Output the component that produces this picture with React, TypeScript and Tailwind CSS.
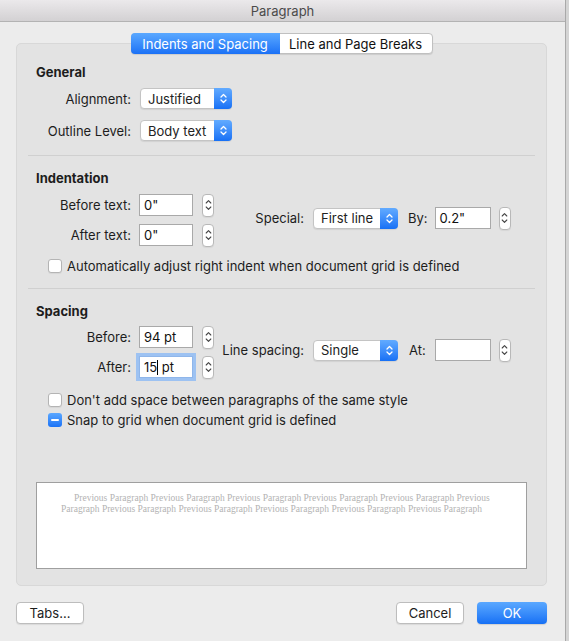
import React from "react";

function PopupArrows() {
    return (
        <svg width="7" height="11" viewBox="0 0 7 11" fill="none" stroke="white" strokeWidth="1.3" strokeLinecap="round" strokeLinejoin="round">
            <path d="M1 4 L3.5 1.5 L6 4" />
            <path d="M1 7 L3.5 9.5 L6 7" />
        </svg>
    );
}

function Popup({ value, className }: { value: string; className: string }) {
    return (
        <div className={"flex h-[21px] items-stretch rounded-[4px] border border-[#c4c4c4] bg-white shadow-[0_1px_1px_rgba(0,0,0,0.08)] " + className}>
            <span className="flex flex-1 items-center pl-[7px] text-[13px] text-[#222]">{value}</span>
            <span className="-my-px -mr-px flex w-[18px] items-center justify-center rounded-r-[4px] bg-gradient-to-b from-[#62abff] to-[#1670f5]">
                <PopupArrows />
            </span>
        </div>
    );
}

function Stepper({ className = "" }: { className?: string }) {
    return (
        <div className={"flex h-[23px] w-[12px] shrink-0 items-center justify-center rounded-[4px] border border-[#b8b8b8] bg-white shadow-[0_1px_1px_rgba(0,0,0,0.06)] " + className}>
            <svg width="7" height="14" viewBox="0 0 7 14" fill="none" stroke="#444" strokeWidth="1.1" strokeLinecap="round" strokeLinejoin="round">
                <path d="M1.2 5 L3.5 2.7 L5.8 5" />
                <path d="M1.2 9 L3.5 11.3 L5.8 9" />
            </svg>
        </div>
    );
}

function Field({ value, className = "" }: { value: string; className?: string }) {
    return (
        <div className={"flex h-[22px] items-center border border-[#a9a9a9] bg-white pl-[4px] text-[13px] text-[#111] " + className}>
            {value}
        </div>
    );
}

function FieldRow({ label, value }: { label: string; value: string }) {
    return (
        <div className="flex h-[22px] items-center">
            <span className="w-[114px] text-right">{label}</span>
            <Field value={value} className="ml-[8px] w-[54px]" />
            <Stepper className="ml-[9px]" />
        </div>
    );
}

function Check({ label, mixed = false }: { label: string; mixed?: boolean }) {
    return (
        <div className="flex h-[16px] items-center pl-[31px]">
            {mixed ? (
                <span className="flex h-[14px] w-[14px] items-center justify-center rounded-[3px] bg-gradient-to-b from-[#5aa7ff] to-[#1a72f6]">
                    <span className="h-[2px] w-[8px] rounded-full bg-white" />
                </span>
            ) : (
                <span className="h-[14px] w-[14px] rounded-[3px] border border-[#b4b4b4] bg-white shadow-[0_1px_1px_rgba(0,0,0,0.06)]" />
            )}
            <span className="ml-[5px]">{label}</span>
        </div>
    );
}

function Heading({ children, className = "" }: { children: React.ReactNode; className?: string }) {
    return <div className={"h-[16px] pl-[19px] text-[13px] font-bold leading-[16px] " + className}>{children}</div>;
}

function Separator() {
    return <div className="mx-[11px] mt-[14px] h-px bg-[#d0d0d0]" />;
}

export default function App() {
    return (
        <div className="flex h-[641px] w-[569px] bg-[#d4d4d4] font-['Inter',sans-serif] text-[13px] leading-[16px] text-[#1d1d1d]">
            <div className="flex h-full w-[566px] flex-col border-r border-[#a9a9a9] bg-[#ececec]">
                {/* title bar */}
                <div className="flex h-[22px] shrink-0 items-center justify-center rounded-tr-[5px] border-b border-[#b3b3b3] bg-gradient-to-b from-[#ebe9eb] to-[#d3d1d3] text-[13px] text-[#4b4b4b]">
                    Paragraph
                </div>

                <div className="flex flex-col pl-[16px] pt-[11px]">
                    {/* tabs */}
                    <div className="relative z-10 -mb-[11px] flex w-[531px] justify-center">
                        <div className="flex h-[21px] rounded-[4px] border border-[#c0c0c0] bg-white text-[13px] shadow-[0_1px_1px_rgba(0,0,0,0.1)]">
                            <span className="-my-px -ml-px flex w-[149px] items-center justify-center rounded-l-[4px] bg-gradient-to-b from-[#5aa8ff] to-[#1b71f6] text-white">
                                Indents and Spacing
                            </span>
                            <span className="flex w-[152px] items-center justify-center text-[#111]">Line and Page Breaks</span>
                        </div>
                    </div>

                    {/* panel */}
                    <div className="flex h-[543px] w-[531px] flex-col rounded-[5px] border border-[#d8d8d8] bg-[#e3e3e3] pt-[20px]">
                        <Heading>General</Heading>
                        <div className="mt-[8px] flex h-[21px] items-center">
                            <span className="w-[114px] text-right">Alignment:</span>
                            <Popup value="Justified" className="ml-[9px] w-[92px]" />
                        </div>
                        <div className="mt-[11px] flex h-[21px] items-center">
                            <span className="w-[114px] text-right">Outline Level:</span>
                            <Popup value="Body text" className="ml-[9px] w-[92px]" />
                        </div>

                        <Separator />

                        <Heading className="mt-[14px]">Indentation</Heading>
                        <div className="mt-[8px] flex items-center">
                            <div className="flex flex-col gap-[8px]">
                                <FieldRow label="Before text:" value={'0"'} />
                                <FieldRow label="After text:" value={'0"'} />
                            </div>
                            <div className="mb-[4px] flex h-[22px] items-center">
                                <span className="w-[90px] text-right">Special:</span>
                                <Popup value="First line" className="ml-[9px] w-[85px]" />
                                <span className="ml-[10px]">By:</span>
                                <Field value={'0.2"'} className="ml-[7px] w-[56px]" />
                                <Stepper className="ml-[8px]" />
                            </div>
                        </div>
                        <div className="mt-[12px]">
                            <Check label="Automatically adjust right indent when document grid is defined" />
                        </div>

                        <Separator />

                        <Heading className="mt-[14px]">Spacing</Heading>
                        <div className="mt-[7px] flex items-center">
                            <div className="flex flex-col gap-[8px]">
                                <FieldRow label="Before:" value="94 pt" />
                                <div className="flex h-[22px] items-center">
                                    <span className="w-[114px] text-right">After:</span>
                                    <div className="ml-[8px] flex h-[22px] w-[54px] items-center border border-[#8fb6ea] bg-white pl-[4px] text-[13px] text-[#111] shadow-[0_0_0_3px_#9dc2f2]">
                                        <span className="whitespace-pre">
                                            15<span className="inline-block h-[15px] w-px bg-black align-[-3px]" /> pt
                                        </span>
                                    </div>
                                    <Stepper className="ml-[9px]" />
                                </div>
                            </div>
                            <div className="mb-[4px] flex h-[22px] items-center">
                                <span className="w-[90px] text-right">Line spacing:</span>
                                <Popup value="Single" className="ml-[9px] w-[85px]" />
                                <span className="ml-[11px]">At:</span>
                                <Field value="" className="ml-[9px] w-[56px]" />
                                <Stepper className="ml-[8px]" />
                            </div>
                        </div>
                        <div className="mt-[14px]">
                            <Check label="Don't add space between paragraphs of the same style" />
                        </div>
                        <div className="mt-[4px]">
                            <Check label="Snap to grid when document grid is defined" mixed />
                        </div>

                        {/* preview */}
                        <div className="mx-[19px] mt-[54px] h-[87px] border border-[#9f9f9f] bg-white pt-[10px] font-['Liberation_Serif','Times_New_Roman',serif] text-[9.5px] leading-[10.5px] text-[#b3b3b3]">
                            <div className="whitespace-nowrap pl-[37px]">
                                Previous Paragraph Previous Paragraph Previous Paragraph Previous Paragraph Previous Paragraph Previous
                            </div>
                            <div className="whitespace-nowrap pl-[24px]">
                                Paragraph Previous Paragraph Previous Paragraph Previous Paragraph Previous Paragraph Previous Paragraph
                            </div>
                        </div>
                    </div>

                    {/* buttons */}
                    <div className="mt-[16px] flex w-[531px] items-center">
                        <button className="flex h-[22px] w-[68px] items-center justify-center rounded-[4px] border border-[#bdbdbd] bg-white text-[13px] text-[#1d1d1d] shadow-[0_1px_1px_rgba(0,0,0,0.08)]">
                            Tabs...
                        </button>
                        <div className="flex-1" />
                        <button className="flex h-[22px] w-[68px] items-center justify-center rounded-[4px] border border-[#bdbdbd] bg-white text-[13px] text-[#1d1d1d] shadow-[0_1px_1px_rgba(0,0,0,0.08)]">
                            Cancel
                        </button>
                        <button className="ml-[13px] flex h-[22px] w-[70px] items-center justify-center rounded-[4px] bg-gradient-to-b from-[#5aa8ff] to-[#1570f5] text-[13px] text-white shadow-[0_1px_1px_rgba(0,0,0,0.12)]">
                            OK
                        </button>
                    </div>
                </div>
            </div>
        </div>
    );
}
